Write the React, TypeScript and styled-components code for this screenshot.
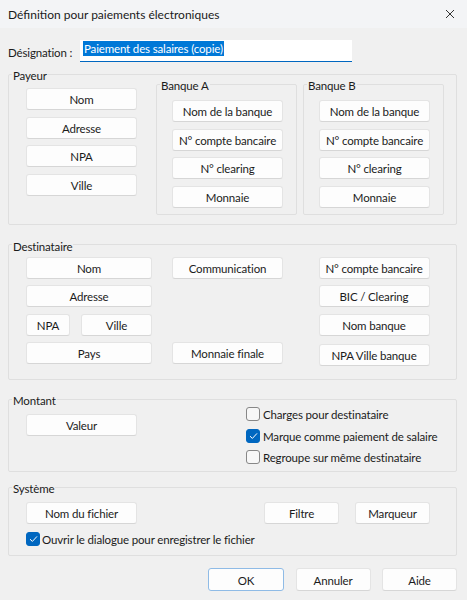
import React from "react";
import styled, { createGlobalStyle } from "styled-components";

const GlobalStyle = createGlobalStyle`
  html, body { margin: 0; padding: 0; }
  body {
    background: #f0f0f0;
    font-family: Lato, "Noto Sans", sans-serif;
    font-size: 11.5px;
    letter-spacing: -0.15px;
    color: #1b1b1b;
  }
  * { box-sizing: border-box; }
`;

const Window = styled.div`
  width: 467px;
  height: 600px;
  display: flex;
  flex-direction: column;
  background: #f0f0f0;
  overflow: hidden;
  white-space: nowrap;
`;

const TitleBar = styled.div`
  height: 28px;
  flex: none;
  display: flex;
  align-items: center;
  justify-content: space-between;
  padding: 0 12px 0 8px;
  background: #f3f4f6;
`;

const Title = styled.span`
  font-size: 12px;
  letter-spacing: 0;
  color: #1a1a1a;
`;

const CloseBtn = styled.svg`
  width: 10px;
  height: 10px;
`;

const Body = styled.div`
  padding: 0 10px 0 8px;
  display: flex;
  flex-direction: column;
`;

const DesigRow = styled.div`
  margin-top: 12px;
  display: flex;
  align-items: center;
  height: 22px;
`;

const DesigLabel = styled.span`
  width: 72px;
  flex: none;
  padding-top: 2px;
`;

const FakeInput = styled.div`
  width: 272px;
  height: 22px;
  background: #ffffff;
  border-bottom: 1px solid #0067c0;
  padding: 0 0 0 3px;
  display: flex;
  align-items: flex-start;
`;

const Selected = styled.span`
  background: #0078d7;
  color: #ffffff;
  line-height: 15px;
  margin-top: 1px;
  padding: 0 1px;
`;

const Group = styled.fieldset<{ $mt?: number; $pad?: string; $pl: number }>`
  margin: ${(p) => p.$mt ?? 0}px 0 0 0;
  padding: ${(p) => p.$pad ?? "0"};
  padding-left: ${(p) => p.$pl}px;
  border: 1px solid #dfdfdf;
  border-radius: 2px;
  min-width: 0;

  & > legend {
    margin-left: ${(p) => 3 - p.$pl}px;
  }
`;

const Legend = styled.legend`
  padding: 3px 1px 0 1px;
  line-height: 11px;
  margin-bottom: -4px;
  color: #1b1b1b;
`;

const Btn = styled.div<{ $w?: number; $h?: number; $default?: boolean }>`
  width: ${(p) => p.$w ?? 111}px;
  height: ${(p) => p.$h ?? 22}px;
  flex: none;
  display: flex;
  align-items: center;
  justify-content: center;
  padding-top: 1px;
  background: #fdfdfd;
  border: 1px solid ${(p) => (p.$default ? "#8fbbe6" : "#e4e4e4")};
  border-bottom-color: ${(p) => (p.$default ? "#8fbbe6" : "#d6d6d6")};
  border-radius: 3px;
  color: #1b1b1b;
  white-space: nowrap;
`;

const Column = styled.div<{ $mt?: number }>`
  display: flex;
  flex-direction: column;
  gap: 6.5px;
  margin-top: ${(p) => p.$mt ?? 0}px;
`;

const PayeurInner = styled.div`
  display: flex;
  align-items: flex-start;
`;

const BankGroup = styled(Group)<{ $ml: number }>`
  width: 141px;
  margin-left: ${(p) => p.$ml}px;
`;

const DestGrid = styled.div`
  display: grid;
  grid-template-columns: 126px 111px 111px;
  grid-auto-rows: 22px;
  column-gap: 20px;
  row-gap: 6.5px;
  align-items: start;
`;

const Cell = styled.div<{ $col: number; $row: number; $mt?: number }>`
  grid-column: ${(p) => p.$col};
  grid-row: ${(p) => p.$row};
  margin-top: ${(p) => p.$mt ?? 0}px;
  display: flex;
  gap: 11px;
`;

const RightCell = styled(Cell)`
  margin-left: 15.5px;
`;

const MontantInner = styled.div`
  display: flex;
  align-items: flex-start;
`;

const ValeurWrap = styled.div`
  margin-top: 10.5px;
`;

const CheckList = styled.div`
  display: flex;
  flex-direction: column;
  margin-left: 109px;
`;

const CheckRow = styled.div<{ $h?: number; $mt?: number; $gap?: number }>`
  height: ${(p) => p.$h ?? 21.5}px;
  margin-top: ${(p) => p.$mt ?? 0}px;
  display: flex;
  align-items: center;
  gap: ${(p) => p.$gap ?? 3}px;
`;

const CheckText = styled.span`
  padding-top: 1px;
`;

const Box = styled.span<{ $checked?: boolean }>`
  width: 14px;
  height: 14px;
  flex: none;
  border-radius: 3px;
  display: flex;
  align-items: center;
  justify-content: center;
  background: ${(p) => (p.$checked ? "#0067c0" : "#f7f7f7")};
  border: 1px solid ${(p) => (p.$checked ? "#0067c0" : "#878787")};
`;

const SysRow = styled.div`
  display: flex;
  align-items: center;
  padding-right: 26px;
`;

const Spacer = styled.div`
  flex: 1;
`;

const SysGap = styled.div`
  width: 16px;
  flex: none;
`;

const Footer = styled.div`
  margin-top: 12px;
  display: flex;
  justify-content: flex-end;
  gap: 11.5px;
`;

const Check = ({ checked }: { checked?: boolean }) => (
  <Box $checked={checked}>
    {checked && (
      <svg width="9" height="8" viewBox="0 0 9 8">
        <path d="M1 4.2 L3.4 6.4 L8 1.4" fill="none" stroke="#ffffff" strokeWidth="1" />
      </svg>
    )}
  </Box>
);

export default function App() {
  return (
    <>
      <GlobalStyle />
      <Window>
        <TitleBar>
          <Title>Définition pour paiements électroniques</Title>
          <CloseBtn viewBox="0 0 10 10">
            <path d="M1 1 L9 9 M9 1 L1 9" stroke="#333" strokeWidth="1" />
          </CloseBtn>
        </TitleBar>
        <Body>
          <DesigRow>
            <DesigLabel>Désignation :</DesigLabel>
            <FakeInput>
              <Selected>Paiement des salaires (copie)</Selected>
            </FakeInput>
          </DesigRow>

          <Group $mt={5} $pad="0 0 9px 0" $pl={17}>
            <Legend>Payeur</Legend>
            <PayeurInner>
              <Column $mt={11}>
                <Btn>Nom</Btn>
                <Btn>Adresse</Btn>
                <Btn>NPA</Btn>
                <Btn>Ville</Btn>
              </Column>
              <BankGroup $pad="13px 13px 6px 0" $pl={15} $ml={19}>
                <Legend>Banque A</Legend>
                <Column>
                  <Btn>Nom de la banque</Btn>
                  <Btn>N° compte bancaire</Btn>
                  <Btn>N° clearing</Btn>
                  <Btn>Monnaie</Btn>
                </Column>
              </BankGroup>
              <BankGroup $pad="13px 13px 6px 0" $pl={15} $ml={6}>
                <Legend>Banque B</Legend>
                <Column>
                  <Btn>Nom de la banque</Btn>
                  <Btn>N° compte bancaire</Btn>
                  <Btn>N° clearing</Btn>
                  <Btn>Monnaie</Btn>
                </Column>
              </BankGroup>
            </PayeurInner>
          </Group>

          <Group $mt={13} $pad="9px 0 15px 0" $pl={17}>
            <Legend>Destinataire</Legend>
            <DestGrid>
              <Cell $col={1} $row={1}><Btn $w={126}>Nom</Btn></Cell>
              <Cell $col={1} $row={2}><Btn $w={126}>Adresse</Btn></Cell>
              <Cell $col={1} $row={3}>
                <Btn $w={44}>NPA</Btn>
                <Btn $w={71}>Ville</Btn>
              </Cell>
              <Cell $col={1} $row={4}><Btn $w={126}>Pays</Btn></Cell>
              <Cell $col={2} $row={1}><Btn>Communication</Btn></Cell>
              <Cell $col={2} $row={4}><Btn>Monnaie finale</Btn></Cell>
              <RightCell $col={3} $row={1}><Btn>N° compte bancaire</Btn></RightCell>
              <RightCell $col={3} $row={2}><Btn>BIC / Clearing</Btn></RightCell>
              <RightCell $col={3} $row={3}><Btn>Nom banque</Btn></RightCell>
              <RightCell $col={3} $row={4} $mt={2}><Btn>NPA Ville banque</Btn></RightCell>
            </DestGrid>
          </Group>

          <Group $mt={12} $pad="1.5px 0 3px 0" $pl={17}>
            <Legend>Montant</Legend>
            <MontantInner>
              <ValeurWrap>
                <Btn>Valeur</Btn>
              </ValeurWrap>
              <CheckList>
                <CheckRow><Check /><CheckText>Charges pour destinataire</CheckText></CheckRow>
                <CheckRow><Check checked /><CheckText>Marque comme paiement de salaire</CheckText></CheckRow>
                <CheckRow><Check /><CheckText>Regroupe sur même destinataire</CheckText></CheckRow>
              </CheckList>
            </MontantInner>
          </Group>

          <Group $mt={8} $pad="11.5px 0 8px 0" $pl={17}>
            <Legend>Système</Legend>
            <SysRow>
              <Btn>Nom du fichier</Btn>
              <Spacer />
              <Btn $w={75}>Filtre</Btn>
              <SysGap />
              <Btn $w={75}>Marqueur</Btn>
            </SysRow>
            <CheckRow $h={16} $mt={7.5} $gap={2}>
              <Check checked />
              <CheckText>Ouvrir le dialogue pour enregistrer le fichier</CheckText>
            </CheckRow>
          </Group>

          <Footer>
            <Btn $w={76} $h={23} $default>OK</Btn>
            <Btn $w={75} $h={23}>Annuler</Btn>
            <Btn $w={75} $h={23}>Aide</Btn>
          </Footer>
        </Body>
      </Window>
    </>
  );
}
